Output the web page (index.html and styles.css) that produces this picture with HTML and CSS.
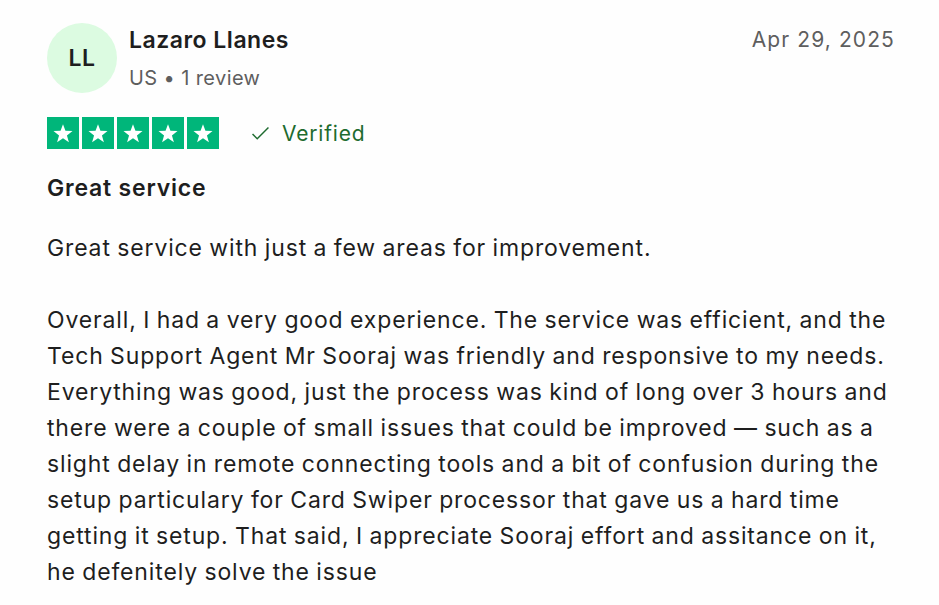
FILE: index.html
```html
<!DOCTYPE html>
<html lang="en">
  <head>
    <title>Review - Lazaro Llanes</title>
    <meta name="viewport" content="width=device-width, initial-scale=1">
    <link rel="stylesheet" href="styles.css">
  </head>
  <body>
    <article class="review">
      <!-- who wrote it and when -->
      <div class="review-head">
        <div class="avatar">LL</div>
        <div class="reviewer">
          <div class="reviewer-name">Lazaro Llanes</div>
          <div class="reviewer-meta">US &bull; 1 review</div>
        </div>
        <time class="review-date" datetime="2025-04-29">Apr 29, 2025</time>
      </div>

      <!-- rating row -->
      <div class="rating-row">
        <div class="stars" title="Rated 5 out of 5">
          <span class="star"><svg viewBox="0 0 24 24"><path d="M12 3.2l2.45 6.6 7.05.25-5.55 4.35 1.95 6.8L12 17.3l-5.9 3.9 1.950-6.8L2.5 10.05l7.05-.25z"/></svg></span>
          <span class="star"><svg viewBox="0 0 24 24"><path d="M12 3.2l2.45 6.6 7.05.25-5.55 4.35 1.95 6.8L12 17.3l-5.9 3.9 1.95-6.8L2.5 10.05l7.05-.25z"/></svg></span>
          <span class="star"><svg viewBox="0 0 24 24"><path d="M12 3.2l2.45 6.6 7.05.25-5.55 4.35 1.95 6.8L12 17.3l-5.9 3.9 1.95-6.8L2.5 10.05l7.05-.25z"/></svg></span>
          <span class="star"><svg viewBox="0 0 24 24"><path d="M12 3.2l2.45 6.6 7.05.25-5.55 4.35 1.95 6.8L12 17.3l-5.9 3.9 1.95-6.8L2.5 10.05l7.05-.25z"/></svg></span>
          <span class="star"><svg viewBox="0 0 24 24"><path d="M12 3.2l2.45 6.6 7.05.25-5.55 4.35 1.95 6.8L12 17.3l-5.9 3.9 1.95-6.8L2.5 10.05l7.05-.25z"/></svg></span>
        </div>
        <div class="verified">
          <svg class="check" viewBox="0 0 20 16"><path d="M1.5 8.5l5 5L18.5 1.5"/></svg>
          <span>Verified</span>
        </div>
      </div>

      <h2 class="review-title">Great service</h2>

      <div class="review-body">
        <p>Great service with just a few areas for improvement.</p>
        <p>Overall, I had a very good experience. The service was efficient, and the Tech Support Agent Mr Sooraj was friendly and responsive to my needs. Everything was good, just the process was kind of long over 3 hours and there were a couple of small issues that could be improved — such as a slight delay in remote connecting tools and a bit of confusion during the setup particulary for Card Swiper processor that gave us a hard time getting it setup. That said, I appreciate Sooraj effort and assitance on it, he defenitely solve the issue</p>
      </div>
    </article>
  </body>
</html>
```

FILE: styles.css
```css
body {
  margin: 0;
  background-color: #fefefe;
  color: #1e1e1e;
  font-family: Inter, "Noto Sans", sans-serif;
}

.review {
  padding: 23px 38px 0 47px;
}

/* header */
.review-head {
  display: flex;
  align-items: flex-start;
  gap: 12px;
  padding-right: 6px;
}
.avatar {
  width: 70px;
  height: 70px;
  border-radius: 50%;
  background-color: #dcfbe1;
  display: flex;
  align-items: center;
  justify-content: center;
  font-size: 23px;
  font-weight: 600;
  letter-spacing: 0.5px;
  flex-shrink: 0;
}
.reviewer {
  flex: 1;
  padding-top: 2px;
}
.reviewer-name {
  font-size: 23px;
  font-weight: 600;
  letter-spacing: 0.5px;
  line-height: 30px;
}
.reviewer-meta {
  font-size: 20px;
  color: #5e5e5e;
  letter-spacing: 0.4px;
  line-height: 30px;
  margin-top: 8px;
}
.review-date {
  font-size: 21px;
  color: #5e5e5e;
  letter-spacing: 1.1px;
  line-height: 30px;
  padding-top: 2px;
}

/* stars + verified */
.rating-row {
  display: flex;
  align-items: center;
  gap: 32px;
  margin-top: 24px;
}
.stars {
  display: flex;
  gap: 3px;
}
.star {
  width: 32px;
  height: 32px;
  background-color: #00b67a;
  display: flex;
  align-items: center;
  justify-content: center;
}
.star svg {
  width: 24px;
  height: 24px;
  fill: #fff;
}
.verified {
  display: flex;
  align-items: center;
  gap: 12px;
  color: #1e6b2f;
  font-size: 21px;
  letter-spacing: 0.8px;
}
.check {
  width: 19px;
  height: 15px;
  fill: none;
  stroke: #1e6b2f;
  stroke-width: 1.6;
}

.review-title {
  margin: 24px 0 0;
  font-size: 23px;
  font-weight: 600;
  letter-spacing: 0.8px;
  line-height: 30px;
}

.review-body {
  margin-top: 27px;
  font-size: 23px;
  letter-spacing: 0.85px;
  word-spacing: -0.8px;
  line-height: 36px;
}
.review-body p {
  margin: 0 0 36px;
}
```
